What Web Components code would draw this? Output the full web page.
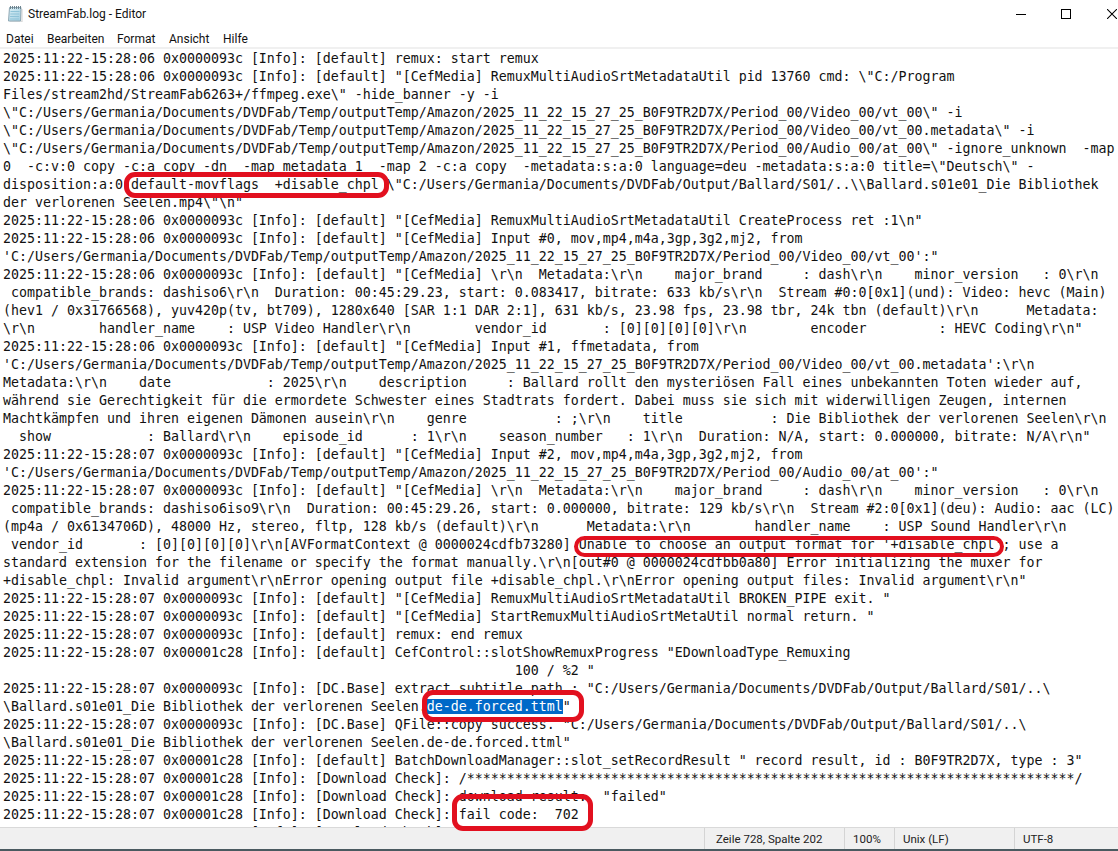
<!DOCTYPE html>
<html lang="de">
<head>
<meta charset="utf-8">
<title>StreamFab.log - Editor</title>
<style>
html, body { margin: 0; height: 100%; background: #fff; }
</style>
</head>
<body>
<notepad-window>
    <title-bar slot="title" caption="StreamFab.log - Editor"></title-bar>
    <menu-bar slot="menu" items="Datei:6,Bearbeiten:47,Format:117,Ansicht:169,Hilfe:223"></menu-bar>
    <log-view slot="log">
<log-line>2025:11:22-15:28:06 0x0000093c [Info]: [default] remux: start remux</log-line>
<log-line>2025:11:22-15:28:06 0x0000093c [Info]: [default] "[CefMedia] RemuxMultiAudioSrtMetadataUtil pid 13760 cmd: \"C:/Program</log-line>
<log-line>Files/stream2hd/StreamFab6263+/ffmpeg.exe\" -hide_banner -y -i</log-line>
<log-line>\"C:/Users/Germania/Documents/DVDFab/Temp/outputTemp/Amazon/2025_11_22_15_27_25_B0F9TR2D7X/Period_00/Video_00/vt_00\" -i</log-line>
<log-line>\"C:/Users/Germania/Documents/DVDFab/Temp/outputTemp/Amazon/2025_11_22_15_27_25_B0F9TR2D7X/Period_00/Video_00/vt_00.metadata\" -i</log-line>
<log-line>\"C:/Users/Germania/Documents/DVDFab/Temp/outputTemp/Amazon/2025_11_22_15_27_25_B0F9TR2D7X/Period_00/Audio_00/at_00\" -ignore_unknown  -map</log-line>
<log-line>0  -c:v:0 copy -c:a copy -dn  -map metadata 1  -map 2 -c:a copy  -metadata:s:a:0 language=deu -metadata:s:a:0 title=\"Deutsch\" -</log-line>
<log-line>disposition:a:0 <log-mark style="--l:-7px;--r:-10px;--t:-5px;--b:-6px;--w:5px">default-movflags  +disable_chpl</log-mark> \"C:/Users/Germania/Documents/DVDFab/Output/Ballard/S01/..\\Ballard.s01e01_Die Bibliothek</log-line>
<log-line>der verlorenen Seelen.mp4\"\n"</log-line>
<log-line>2025:11:22-15:28:06 0x0000093c [Info]: [default] "[CefMedia] RemuxMultiAudioSrtMetadataUtil CreateProcess ret :1\n"</log-line>
<log-line>2025:11:22-15:28:06 0x0000093c [Info]: [default] "[CefMedia] Input #0, mov,mp4,m4a,3gp,3g2,mj2, from</log-line>
<log-line>'C:/Users/Germania/Documents/DVDFab/Temp/outputTemp/Amazon/2025_11_22_15_27_25_B0F9TR2D7X/Period_00/Video_00/vt_00':"</log-line>
<log-line>2025:11:22-15:28:06 0x0000093c [Info]: [default] "[CefMedia] \r\n  Metadata:\r\n    major_brand     : dash\r\n    minor_version   : 0\r\n</log-line>
<log-line> compatible_brands: dashiso6\r\n  Duration: 00:45:29.23, start: 0.083417, bitrate: 633 kb/s\r\n  Stream #0:0[0x1](und): Video: hevc (Main)</log-line>
<log-line>(hev1 / 0x31766568), yuv420p(tv, bt709), 1280x640 [SAR 1:1 DAR 2:1], 631 kb/s, 23.98 fps, 23.98 tbr, 24k tbn (default)\r\n      Metadata:</log-line>
<log-line>\r\n        handler_name    : USP Video Handler\r\n        vendor_id       : [0][0][0][0]\r\n        encoder         : HEVC Coding\r\n"</log-line>
<log-line>2025:11:22-15:28:06 0x0000093c [Info]: [default] "[CefMedia] Input #1, ffmetadata, from</log-line>
<log-line>'C:/Users/Germania/Documents/DVDFab/Temp/outputTemp/Amazon/2025_11_22_15_27_25_B0F9TR2D7X/Period_00/Video_00/vt_00.metadata':\r\n</log-line>
<log-line>Metadata:\r\n    date            : 2025\r\n    description     : Ballard rollt den mysteriösen Fall eines unbekannten Toten wieder auf,</log-line>
<log-line>während sie Gerechtigkeit für die ermordete Schwester eines Stadtrats fordert. Dabei muss sie sich mit widerwilligen Zeugen, internen</log-line>
<log-line>Machtkämpfen und ihren eigenen Dämonen ausein\r\n    genre           : ;\r\n    title           : Die Bibliothek der verlorenen Seelen\r\n</log-line>
<log-line>  show            : Ballard\r\n    episode_id      : 1\r\n    season_number   : 1\r\n  Duration: N/A, start: 0.000000, bitrate: N/A\r\n"</log-line>
<log-line>2025:11:22-15:28:07 0x0000093c [Info]: [default] "[CefMedia] Input #2, mov,mp4,m4a,3gp,3g2,mj2, from</log-line>
<log-line>'C:/Users/Germania/Documents/DVDFab/Temp/outputTemp/Amazon/2025_11_22_15_27_25_B0F9TR2D7X/Period_00/Audio_00/at_00':"</log-line>
<log-line>2025:11:22-15:28:07 0x0000093c [Info]: [default] "[CefMedia] \r\n  Metadata:\r\n    major_brand     : dash\r\n    minor_version   : 0\r\n</log-line>
<log-line> compatible_brands: dashiso6iso9\r\n  Duration: 00:45:29.26, start: 0.000000, bitrate: 129 kb/s\r\n  Stream #2:0[0x1](deu): Audio: aac (LC)</log-line>
<log-line>(mp4a / 0x6134706D), 48000 Hz, stereo, fltp, 128 kb/s (default)\r\n      Metadata:\r\n        handler_name    : USP Sound Handler\r\n</log-line>
<log-line> vendor_id       : [0][0][0][0]\r\n[AVFormatContext @ 0000024cdfb73280] <log-mark style="--l:-5px;--r:-1px;--t:-1px;--b:-5px;--w:4px">Unable to choose an output format for '+disable_chpl'</log-mark>; use a</log-line>
<log-line>standard extension for the filename or specify the format manually.\r\n[out#0 @ 0000024cdfbb0a80] Error initializing the muxer for</log-line>
<log-line>+disable_chpl: Invalid argument\r\nError opening output file +disable_chpl.\r\nError opening output files: Invalid argument\r\n"</log-line>
<log-line>2025:11:22-15:28:07 0x0000093c [Info]: [default] "[CefMedia] RemuxMultiAudioSrtMetadataUtil BROKEN_PIPE exit. "</log-line>
<log-line>2025:11:22-15:28:07 0x0000093c [Info]: [default] "[CefMedia] StartRemuxMultiAudioSrtMetaUtil normal return. "</log-line>
<log-line>2025:11:22-15:28:07 0x0000093c [Info]: [default] remux: end remux</log-line>
<log-line>2025:11:22-15:28:07 0x00001c28 [Info]: [default] CefControl::slotShowRemuxProgress "EDownloadType_Remuxing</log-line>
<log-line>                                                                100 / %2 "</log-line>
<log-line>2025:11:22-15:28:07 0x0000093c [Info]: [DC.Base] extract subtitle path : "C:/Users/Germania/Documents/DVDFab/Output/Ballard/S01/..\</log-line>
<log-line>\Ballard.s01e01_Die Bibliothek der verlorenen Seelen.<log-mark style="--l:-5px;--r:-13px;--t:-9px;--b:-8px;--w:5px"><sel-text>de-de.forced.ttml</sel-text>"</log-mark></log-line>
<log-line>2025:11:22-15:28:07 0x0000093c [Info]: [DC.Base] QFile::copy success. "C:/Users/Germania/Documents/DVDFab/Output/Ballard/S01/..\</log-line>
<log-line>\Ballard.s01e01_Die Bibliothek der verlorenen Seelen.de-de.forced.ttml"</log-line>
<log-line>2025:11:22-15:28:07 0x00001c28 [Info]: [default] BatchDownloadManager::slot_setRecordResult " record result, id : B0F9TR2D7X, type : 3"</log-line>
<log-line>2025:11:22-15:28:07 0x00001c28 [Info]: [Download Check]: /****************************************************************************/</log-line>
<log-line>2025:11:22-15:28:07 0x00001c28 [Info]: [Download Check]: download result:  "failed"</log-line>
<log-line>2025:11:22-15:28:07 0x00001c28 [Info]: [Download Check]: <log-mark style="--l:-7px;--r:-14px;--t:-13px;--b:-9px;--w:5px">fail code:  702</log-mark></log-line>
<log-line style="height:3px;overflow:hidden">2025:11:22-15:28:07 0x00001c28 [Info]: [Download Check]:</log-line>
    </log-view>
    <status-bar slot="status">
        <status-cell style="width:140px;padding-left:11px">Zeile 728, Spalte 202</status-cell>
        <status-cell style="width:50px">100%</status-cell>
        <status-cell style="width:120px">Unix (LF)</status-cell>
        <status-cell style="width:104px">UTF-8</status-cell>
    </status-bar>
</notepad-window>

<script>
const UI_FONT = `Roboto, "Open Sans", "Liberation Sans", sans-serif`;

class NotepadWindow extends HTMLElement {
    constructor() {
        super();
        this.attachShadow({ mode: 'open' }).innerHTML = `
            <style>
                :host { display: flex; flex-direction: column; width: 1118px; height: 851px; overflow: hidden; background: #fff; color: #000; }
                .log { flex: 1; min-height: 0; display: flex; }
            </style>
            <slot name="title"></slot>
            <slot name="menu"></slot>
            <div class="log"><slot name="log"></slot></div>
            <slot name="status"></slot>
        `;
    }
}

class TitleBar extends HTMLElement {
    constructor() {
        super();
        this.attachShadow({ mode: 'open' });
    }

    connectedCallback() {
        this.shadowRoot.innerHTML = `
            <style>
                :host { display: flex; align-items: center; height: 27px; padding: 0 1px 0 7px; font: 12px ${UI_FONT}; }
                svg { display: block; flex: none; }
                .caption { margin-left: 5px; flex: 1; color: #111; }
                .controls { display: flex; align-items: center; gap: 35px; }
                .max { margin-right: 1px; }
            </style>
            <svg width="16" height="16" viewBox="0 0 16 16">
                <defs>
                    <linearGradient id="page" x1="0" y1="0" x2="1" y2="1">
                        <stop offset="0" stop-color="#dcf0f6"/>
                        <stop offset="1" stop-color="#9fcde0"/>
                    </linearGradient>
                </defs>
                <path d="M15 3v13H3" fill="none" stroke="#cfcfcf"/>
                <path d="M2.500 1.500h11.500l-.5 13.500H1.500z" fill="url(#page)" stroke="#8fa8b4"/>
                <path d="M3.500 5.500h9M3.300 8h9M3.100 10.500h9M2.900 13h9" stroke="#8fc3d8"/>
                <path d="M3.500 0v3M5.500 0v3M7.500 0v3M9.500 0v3M11.500 0v3M13.500 0v3" stroke="#6d8490"/>
            </svg>
            <span class="caption">${this.getAttribute('caption') || ''}</span>
            <div class="controls">
                <svg width="10" height="10" viewBox="0 0 10 10"><path d="M0 5.500h10" stroke="#000"/></svg>
                <svg class="max" width="10" height="10" viewBox="0 0 10 10"><rect x="0.500" y="0.500" width="9" height="9" fill="none" stroke="#000"/></svg>
                <svg width="10" height="10" viewBox="0 0 10 10"><path d="M0 0l10 10M10 0L0 10" stroke="#000" stroke-width="1.050"/></svg>
            </div>
        `;
    }
}

class MenuBar extends HTMLElement {
    constructor() {
        super();
        this.attachShadow({ mode: 'open' });
    }

    connectedCallback() {
        // attribute is "label:left" so each entry keeps the gap it has in the real menu
        const items = (this.getAttribute('items') || '').split(',').map(item => item.split(':'));
        let previousEnd = 0;
        this.shadowRoot.innerHTML = `
            <style>
                :host { display: flex; height: 20px; border-bottom: 2px solid #f0f0f0; font: 12px/25px ${UI_FONT}; color: #111; }
                span { display: block; flex: none; }
            </style>
            ${items.map(([label, left]) => `<span data-left="${left}">${label}</span>`).join('')}
        `;
        this.shadowRoot.querySelectorAll('span').forEach(span => {
            span.style.marginLeft = `${Number(span.dataset.left) - previousEnd}px`;
            previousEnd = span.getBoundingClientRect().right;
        });
    }
}

class LogView extends HTMLElement {
    constructor() {
        super();
        this.attachShadow({ mode: 'open' }).innerHTML = `
            <style>
                :host { display: block; flex: 1; min-width: 0; padding: 1px 0 0 3px; font: 13.29px/18px "DejaVu Sans Mono", "Liberation Mono", monospace; color: #111; }
            </style>
            <slot></slot>
        `;
    }
}

// no whitespace around the slot below: the host is white-space: pre
class LogLine extends HTMLElement {
    constructor() {
        super();
        this.attachShadow({ mode: 'open' }).innerHTML =
            `<style>:host { display: block; height: 18px; white-space: pre; }</style><slot></slot>`;
    }
}

// Red hand-drawn frame laid over a run of log text
class LogMark extends HTMLElement {
    constructor() {
        super();
        this.attachShadow({ mode: 'open' }).innerHTML =
            `<style>
                :host { display: inline; position: relative; }
                .frame {
                    position: absolute;
                    left: var(--l, 0); right: var(--r, 0); top: var(--t, 0); bottom: var(--b, 0);
                    border: var(--w, 4px) solid #e2101f;
                    border-radius: 11px;
                    pointer-events: none;
                }
            </style><slot></slot><span class="frame"></span>`;
    }
}

class SelText extends HTMLElement {
    constructor() {
        super();
        this.attachShadow({ mode: 'open' }).innerHTML =
            `<style>:host { display: inline; background: #0069c8; color: #fff; }</style><slot></slot>`;
    }
}

class StatusBar extends HTMLElement {
    constructor() {
        super();
        this.attachShadow({ mode: 'open' }).innerHTML = `
            <style>
                :host { display: flex; justify-content: flex-end; flex: none; height: 21px; background: #f0f0f0; border-top: 1px solid #d9d9d9; border-bottom: 2px solid #4a5a60; font: 11.5px/23px ${UI_FONT}; color: #222; }
            </style>
            <slot></slot>
        `;
    }
}

class StatusCell extends HTMLElement {
    constructor() {
        super();
        this.attachShadow({ mode: 'open' }).innerHTML = `
            <style>
                :host { display: block; flex: none; box-sizing: border-box; padding-left: 8px; border-left: 1px solid #d4d4d4; white-space: nowrap; overflow: hidden; }
            </style>
            <slot></slot>
        `;
    }
}

customElements.define('notepad-window', NotepadWindow);
customElements.define('title-bar', TitleBar);
customElements.define('menu-bar', MenuBar);
customElements.define('log-view', LogView);
customElements.define('log-line', LogLine);
customElements.define('log-mark', LogMark);
customElements.define('sel-text', SelText);
customElements.define('status-bar', StatusBar);
customElements.define('status-cell', StatusCell);
</script>
</body>
</html>
